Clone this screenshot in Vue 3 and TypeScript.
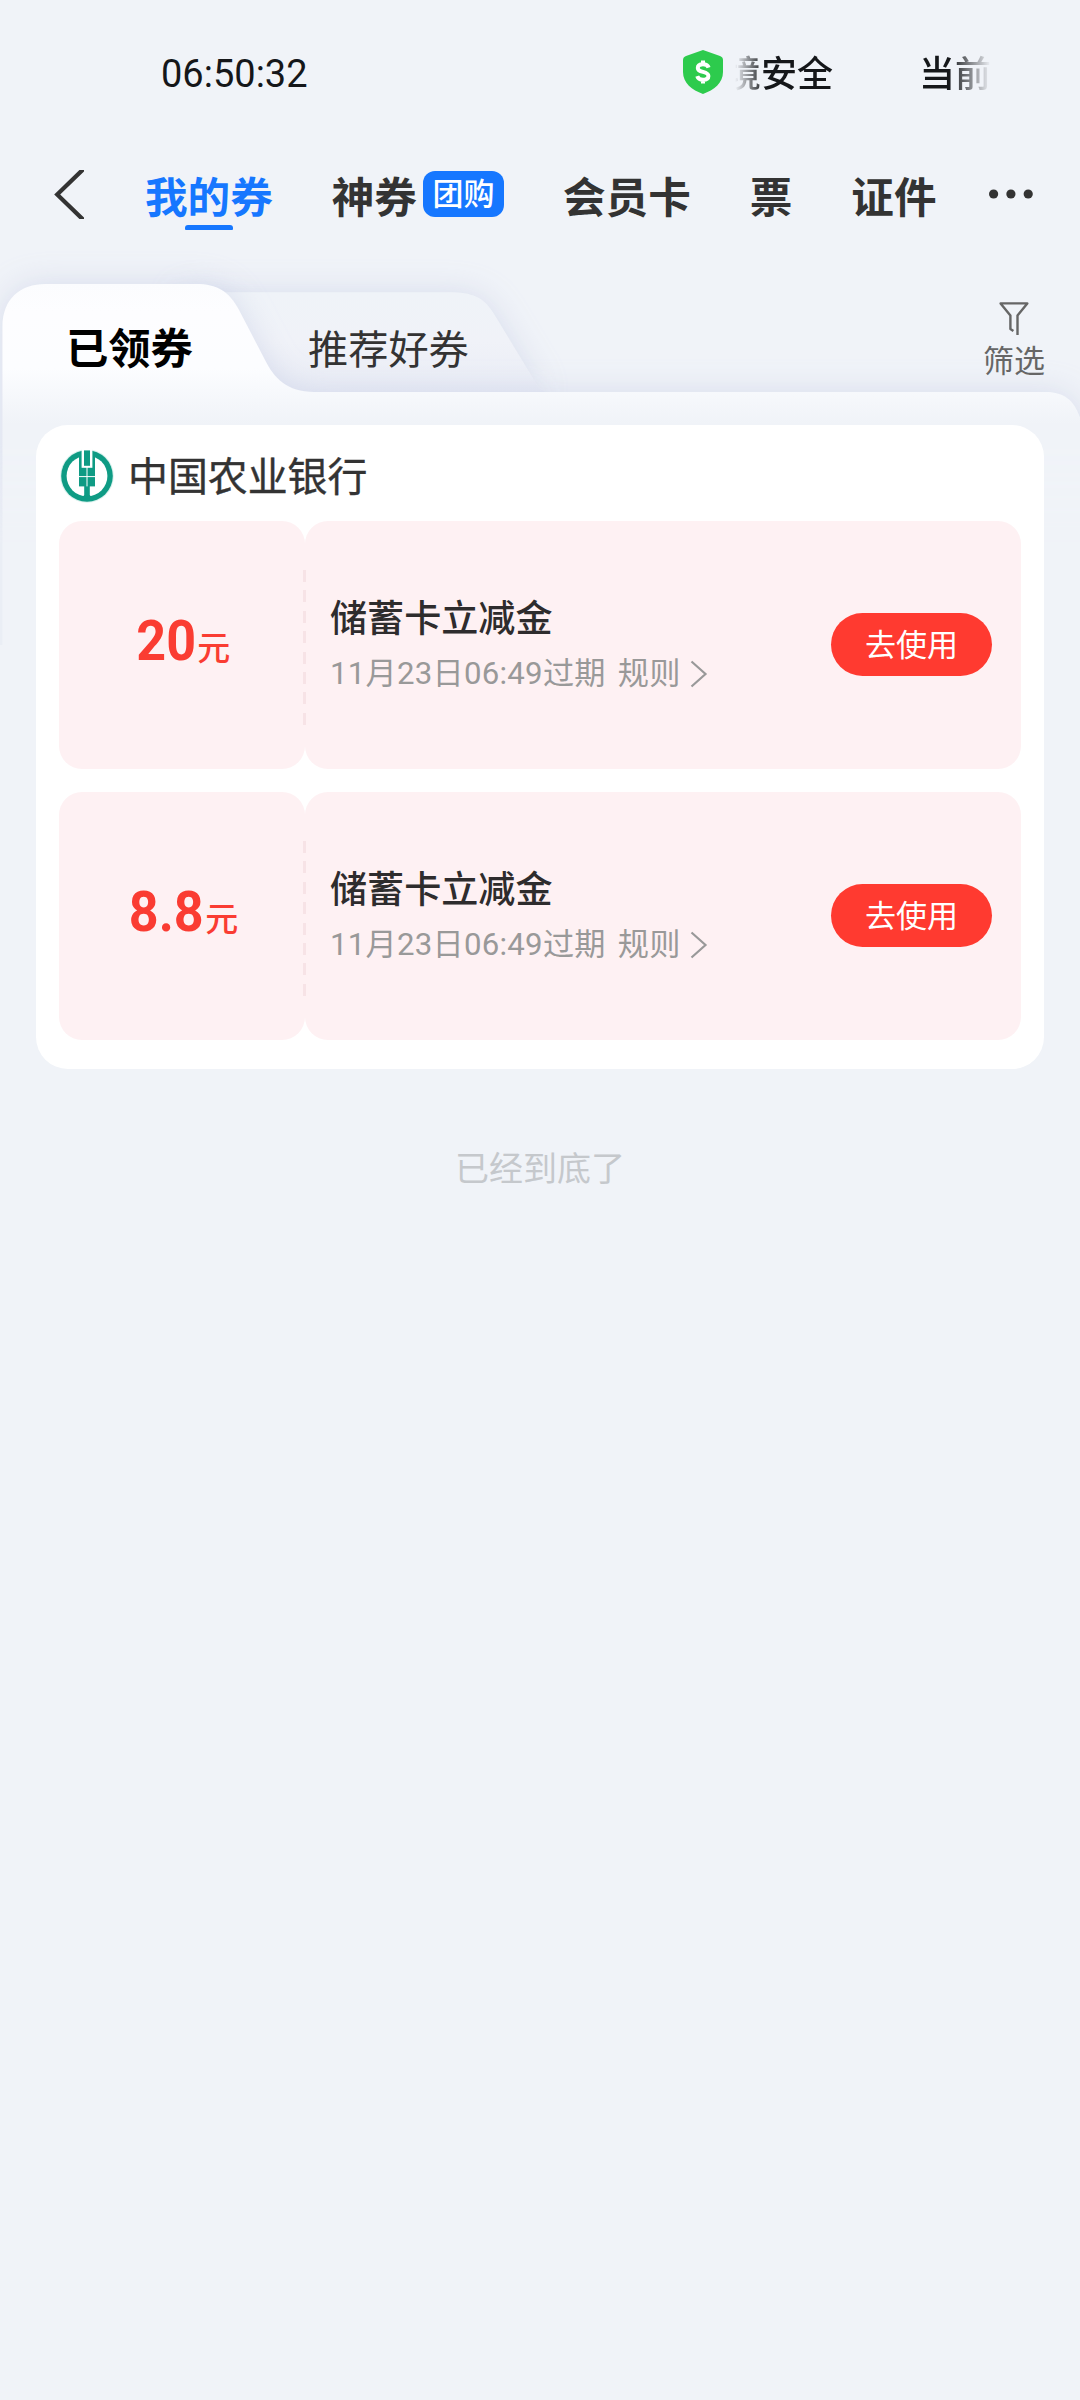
<script setup lang="ts">
interface NavItem {
  label: string
  badge?: string
  active?: boolean
}

interface Coupon {
  id: number
  amount: string
  title: string
  expire: string
}

const navItems: NavItem[] = [
  { label: '我的券', active: true },
  { label: '神券', badge: '团购' },
  { label: '会员卡' },
  { label: '票' },
  { label: '证件' },
]

const coupons: Coupon[] = [
  { id: 1, amount: '20', title: '储蓄卡立减金', expire: '11月23日06:49过期' },
  { id: 2, amount: '8.8', title: '储蓄卡立减金', expire: '11月23日06:49过期' },
]
</script>

<template>
  <div class="page">
    <!-- 状态栏 -->
    <div class="status-bar">
      <span class="clock">06:50:32</span>
      <div class="notice">
        <svg class="shield" width="40" height="44" viewBox="0 0 40 44">
          <path d="M20 0 L37 6 Q40 7 40 10 V22 C40 33 31 40 20 44 C9 40 0 33 0 22 V10 Q0 7 3 6 Z" fill="#2dcb4d" />
          <path
            d="M25.6 17.6 C25 15.4 23 14.2 20 14.2 C16.8 14.2 14.8 15.6 14.8 17.9 C14.8 20.6 17.4 21.3 20 21.9 C22.8 22.6 25.4 23.3 25.4 26 C25.4 28.4 23.4 29.8 20 29.8 C17 29.8 15 28.6 14.2 26.2 M20 10.5 V14 M20 30 V33.6"
            fill="none"
            stroke="#fff"
            stroke-width="4"
          />
        </svg>
        <div class="marquee">
          <span>境安全</span>
          <span>当前</span>
        </div>
      </div>
    </div>

    <!-- 顶部导航 -->
    <div class="nav">
      <svg class="back" width="30" height="49" viewBox="0 0 30 49">
        <path d="M30 -1.5 L3.2 24.5 L30 50.5" fill="none" stroke="#333" stroke-width="4.2" />
      </svg>
      <div class="nav-list">
        <div v-for="item in navItems" :key="item.label" class="nav-item" :class="{ active: item.active }">
          <span class="nav-label">{{ item.label }}</span>
          <span v-if="item.badge" class="nav-badge">{{ item.badge }}</span>
        </div>
      </div>
      <svg class="more" width="46" height="12" viewBox="0 0 46 12">
        <circle cx="5.6" cy="6" r="4.6" fill="#333" />
        <circle cx="22.9" cy="6" r="4.6" fill="#333" />
        <circle cx="40.2" cy="6" r="4.6" fill="#333" />
      </svg>
    </div>

    <div class="content">
      <!-- 异形标签的底板 -->
      <svg class="backdrop" width="1080" height="402" viewBox="0 0 1080 402">
        <defs>
          <linearGradient id="front" gradientUnits="userSpaceOnUse" x1="0" y1="41" x2="0" y2="181">
            <stop offset="0" stop-color="#fbfcfe" />
            <stop offset=".2" stop-color="#fdfdff" />
            <stop offset=".6" stop-color="#fcfdff" />
            <stop offset="1" stop-color="#f0f3f8" />
          </linearGradient>
          <linearGradient id="rear" gradientUnits="userSpaceOnUse" x1="0" y1="49" x2="0" y2="149">
            <stop offset="0" stop-color="#eff3f8" />
            <stop offset=".5" stop-color="#f0f2f8" />
            <stop offset="1" stop-color="#e9ecf5" />
          </linearGradient>
          <filter id="glow" filterUnits="userSpaceOnUse" x="-60" y="-40" width="1220" height="560">
            <feDropShadow dx="0" dy="0" stdDeviation="15" flood-color="#b4bbdc" flood-opacity=".4" />
          </filter>
        </defs>
        <path
          d="M180 49.3 H448 C472 49.3 484 54 494 71 L537 142 C541 148 545 149 549 149 H180 Z"
          fill="url(#rear)"
          filter="url(#glow)"
        />
        <path
          d="M2.5 460 V84 C2.5 56 20 41 46 41 H196 C217 41 229 48 239 67 L265 117 C274 135 287 149 314 149 H1046 C1064 149 1074 158 1079 172 L1090 200 V460 Z"
          fill="url(#front)"
          filter="url(#glow)"
        />
      </svg>

      <div class="tabs">
        <span class="tab-active">已领券</span>
        <span class="tab">推荐好券</span>
        <div class="filter">
          <svg width="32" height="34" viewBox="0 0 32 34">
            <path
              d="M19.5 33 V13.5 L29.3 1.4 H2.6 L12.4 13.5 V27 L15.4 29"
              fill="none"
              stroke="#666"
              stroke-width="2.4"
              stroke-linejoin="round"
            />
          </svg>
          <span>筛选</span>
        </div>
      </div>

      <section class="card">
        <header class="bank">
          <svg width="54" height="54" viewBox="0 0 54 54">
            <circle cx="27" cy="27" r="26.8" fill="#d9f1ed" />
            <circle cx="27" cy="27" r="25.8" fill="#0f9b84" />
            <circle cx="27" cy="27" r="20.4" fill="#fff" />
            <path d="M19 4 H35 V37.4 H19 Z" fill="#0f9b84" />
            <path d="M21.6 0 H32.4 V18.8 H21.6 Z" fill="#fff" />
            <path d="M24 1.4 H30 V16.8 H24 Z" fill="#0f9b84" />
            <path d="M24.2 37 H29.8 V46 L32 49 H22 L24.2 46 Z" fill="#0f9b84" />
            <path d="M27 18 V37.4 M19 27.6 H35" stroke="#fff" stroke-width="1" />
          </svg>
          <span>中国农业银行</span>
        </header>

        <div class="coupon-list">
          <div v-for="coupon in coupons" :key="coupon.id" class="coupon">
            <div class="amount">
              <span class="num">{{ coupon.amount }}</span>
              <span class="unit">元</span>
            </div>
            <div class="detail">
              <div class="info">
                <div class="title">{{ coupon.title }}</div>
                <div class="sub">
                  <span>{{ coupon.expire }}</span>
                  <span class="rule">规则</span>
                  <svg width="18" height="28" viewBox="0 0 18 28">
                    <path d="M1.5 1.5 L15.5 14 L1.5 26.5" fill="none" stroke="#999" stroke-width="2.2" />
                  </svg>
                </div>
              </div>
              <button class="use-btn">去使用</button>
            </div>
          </div>
        </div>
      </section>

      <div class="end">已经到底了</div>
    </div>
  </div>
</template>

<style>
body {
  margin: 0;
  background: #f0f3f8;
}
</style>

<style scoped>
.page {
  width: 1080px;
  height: 2400px;
  overflow: hidden;
  background: #f0f3f8;
  color: #333;
  font-family: Roboto, 'Noto Sans CJK SC', sans-serif;
}
.status-bar {
  display: flex;
  align-items: center;
  justify-content: space-between;
  height: 147px;
  box-sizing: border-box;
  padding: 0 80px 2px 161px;
  color: #15171a;
}
.clock {
  margin-top: 2px;
  font-size: 38px;
}
.notice {
  display: flex;
  align-items: center;
}
.shield {
  margin-top: -1px;
}
.marquee {
  display: flex;
  gap: 86px;
  width: 275px;
  padding-left: 2px;
  margin-top: -4px;
  white-space: nowrap;
  font-size: 36px;
  font-weight: 500;
  line-height: 50px;
  font-family: 'Noto Sans CJK SC', sans-serif;
  -webkit-mask-image: linear-gradient(90deg, transparent 12px, #000 42px, #000 226px, transparent 268px);
  mask-image: linear-gradient(90deg, transparent 12px, #000 42px, #000 226px, transparent 268px);
}
.nav {
  position: relative;
  z-index: 1;
  display: flex;
  align-items: center;
  height: 96px;
  box-sizing: border-box;
  padding: 0 0 2px 54px;
}
.nav-list {
  display: flex;
  gap: 59px;
  margin-left: 61px;
}
.nav-item {
  position: relative;
  display: flex;
  align-items: center;
  height: 60px;
  font-size: 42.6px;
  font-weight: 700;
  line-height: 60px;
}
.nav-label {
  padding-top: 7px;
}
.nav-item.active {
  color: #1677ff;
}
.nav-item.active::after {
  content: '';
  position: absolute;
  left: 50%;
  bottom: -6px;
  width: 48px;
  height: 5px;
  margin-left: -24px;
  border-radius: 3px 3px 1px 1px;
  background: #1677ff;
}
.nav-badge {
  width: 81px;
  height: 46px;
  margin-left: 6px;
  border-radius: 12px;
  background: #1677ff;
  color: #fff;
  font-size: 31px;
  font-weight: 500;
  line-height: 47px;
  text-align: center;
}
.more {
  margin-left: 51px;
}
.content {
  position: relative;
}
.backdrop {
  position: absolute;
  left: 0;
  top: 0;
  -webkit-mask-image: linear-gradient(#000 200px, rgba(0, 0, 0, 0.45) 300px);
  mask-image: linear-gradient(#000 200px, rgba(0, 0, 0, 0.45) 300px);
}
.tabs {
  position: relative;
  display: flex;
  align-items: flex-start;
  height: 182px;
  box-sizing: border-box;
  padding: 59px 35px 0 66px;
}
.tab-active {
  width: 242px;
  color: #000;
  font-size: 42.3px;
  font-weight: 700;
  line-height: 95px;
}
.tab {
  font-size: 40.2px;
  line-height: 98px;
}
.filter {
  display: flex;
  flex-direction: column;
  align-items: center;
  margin-left: auto;
  color: #666;
  font-size: 31px;
  line-height: 44px;
}
.filter span {
  margin-top: 4px;
}
.card {
  position: relative;
  width: 1008px;
  height: 644px;
  box-sizing: border-box;
  margin: 0 auto;
  padding: 24px 23px 0;
  border-radius: 32px;
  background: #fff;
}
.bank {
  display: flex;
  align-items: center;
  gap: 14px;
  height: 54px;
  padding-left: 1px;
  font-size: 39.9px;
}
.bank span {
  margin-top: -6px;
  -webkit-text-stroke: 0.4px #333;
}
.coupon-list {
  display: flex;
  flex-direction: column;
  gap: 23px;
  margin-top: 18px;
}
.coupon {
  display: flex;
  height: 248px;
}
.amount,
.detail {
  box-sizing: border-box;
  border-radius: 23px;
  background: #fef1f3;
}
.amount {
  display: flex;
  align-items: baseline;
  justify-content: center;
  width: 246px;
  padding-top: 85px;
  color: #fa3c32;
}
.num {
  font-size: 56px;
  font-weight: 700;
  line-height: 70px;
  transform: scaleX(0.93);
}
.unit {
  margin-left: -1px;
  font-size: 33px;
  font-weight: 500;
}
.detail {
  position: relative;
  display: flex;
  flex: 1;
  align-items: center;
  justify-content: space-between;
  padding: 0 29px 2px 25px;
}
/* 票券撕线 */
.detail::before {
  content: '';
  position: absolute;
  left: -2px;
  top: 49px;
  width: 3px;
  height: 155px;
  background: repeating-linear-gradient(#f7e3e6 0 12px, transparent 12px 20.4px);
}
.title {
  margin-top: 1px;
  color: #2e2c2d;
  font-size: 37.1px;
  font-weight: 500;
  line-height: 54px;
}
.sub {
  display: flex;
  align-items: center;
  margin-top: 4px;
  color: #999;
  font-size: 31.2px;
  line-height: 46px;
  letter-spacing: 0.25px;
}
.rule {
  margin: 0 9px 0 12px;
}
.use-btn {
  width: 161px;
  height: 63px;
  padding: 2px 0 0;
  border: 0;
  border-radius: 32px;
  background: #ff3a30;
  color: #fff;
  font-family: inherit;
  font-size: 31px;
  line-height: 61px;
}
.end {
  margin-top: 75px;
  color: #c5c8cc;
  font-size: 34px;
  line-height: 50px;
  text-align: center;
}
</style>
